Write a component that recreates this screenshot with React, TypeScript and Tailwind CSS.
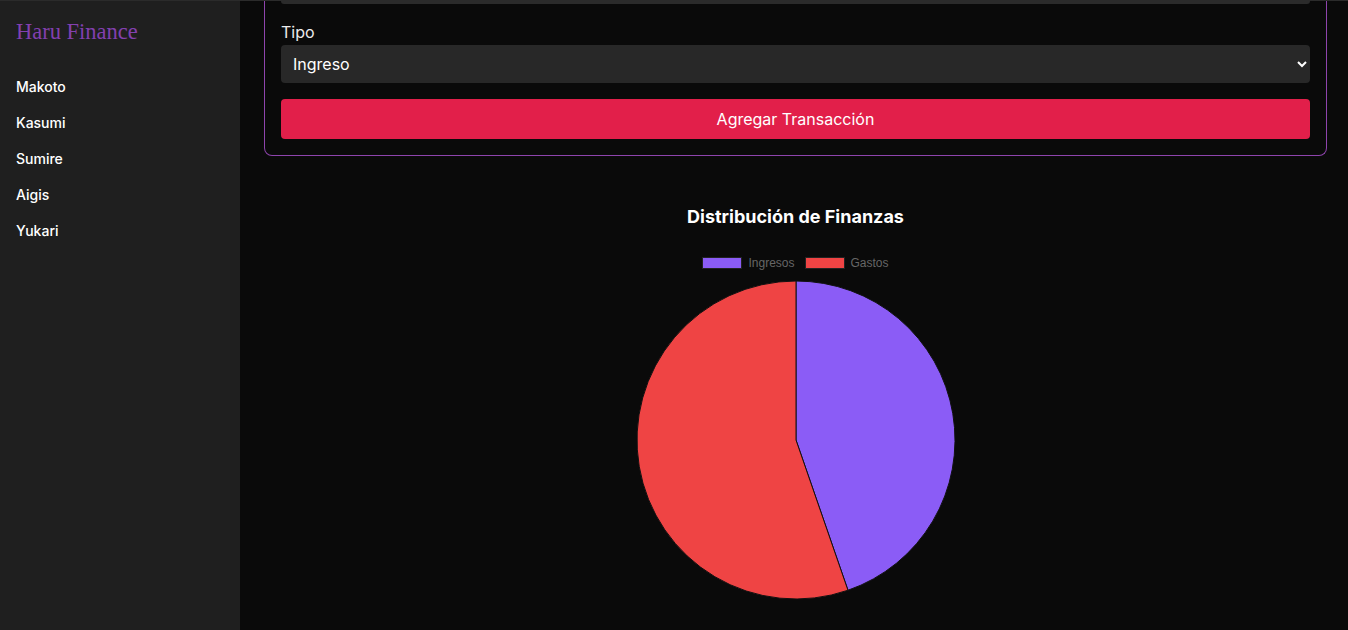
import React from "react";

const users = ["Makoto", "Kasumi", "Sumire", "Aigis", "Yukari"];

const data = [
  { label: "Ingresos", value: 4470, color: "#8b5cf6" },
  { label: "Gastos", value: 5530, color: "#ef4444" },
];

const PieChart = () => {
  const total = data.reduce((s, d) => s + d.value, 0);
  const cx = 160;
  const cy = 160;
  const r = 159;
  let start = -Math.PI / 2;

  return (
    <svg width={320} height={320} viewBox="0 0 320 320">
      {data.map(item => {
        const angle = (item.value / total) * Math.PI * 2;
        const end = start + angle;
        const x1 = cx + r * Math.cos(start);
        const y1 = cy + r * Math.sin(start);
        const x2 = cx + r * Math.cos(end);
        const y2 = cy + r * Math.sin(end);
        const large = angle > Math.PI ? 1 : 0;
        const d = `M ${cx} ${cy} L ${x1} ${y1} A ${r} ${r} 0 ${large} 1 ${x2} ${y2} Z`;
        start = end;
        return <path key={item.label} d={d} fill={item.color} stroke="#111" strokeWidth={1} />;
      })}
    </svg>
  );
};

const App = () => {
  return (
    <div className="flex h-[630px] overflow-hidden border-t border-[#2b2b2b] font-['Inter',sans-serif]">
      <aside className="w-[240px] shrink-0 bg-[#1f1f1f] px-4 pt-[17px]">
        <h1 className="text-[22.5px] leading-[28px] text-[#8340b0] font-['Liberation_Serif',serif]">Haru Finance</h1>
        <nav className="mt-[31px] flex flex-col gap-[16px]">
          {users.map(name => (
            <a key={name} className="text-[14px] leading-[20px] font-medium text-white">{name}</a>
          ))}
        </nav>
      </aside>

      <main className="flex-1 bg-[#0a0a0a] pl-6 pr-[21px]">
        <div className="border border-t-0 border-[#8e44ad] rounded-b-[8px] px-4 pb-4">
          <div className="h-[3px] bg-[#2b2b2b] rounded-b-[4px]" />
          <label className="block mt-4 text-[16px] leading-[24px] text-[#ececec]">Tipo</label>
          <select
            className="mt-[1px] w-full h-[38px] px-[8px] bg-[#282828] text-white text-[16px] rounded-[4px] outline-none"
            defaultValue="ingreso"
          >
            <option value="ingreso">Ingreso</option>
            <option value="gasto">Gasto</option>
          </select>
          <button className="mt-4 w-full h-[40px] bg-[#e21f4a] text-white text-[16px] rounded-[4px]">
            Agregar Transacción
          </button>
        </div>

        <section className="mt-[49px] flex flex-col items-center">
          <h2 className="text-[18px] leading-[24px] font-bold text-white">Distribución de Finanzas</h2>
          <div className="mt-[27px] flex items-center gap-[10px] font-['Liberation_Sans',sans-serif] text-[12px] leading-[14px] text-[#666]">
            {data.map(item => (
              <div key={item.label} className="flex items-center gap-[6px]">
                <span className="w-[40px] h-[12px] border border-[#222]" style={{ backgroundColor: item.color }} />
                <span>{item.label}</span>
              </div>
            ))}
          </div>
          <div className="mt-[10px]">
            <PieChart />
          </div>
        </section>
      </main>
    </div>
  );
};

export default App;
